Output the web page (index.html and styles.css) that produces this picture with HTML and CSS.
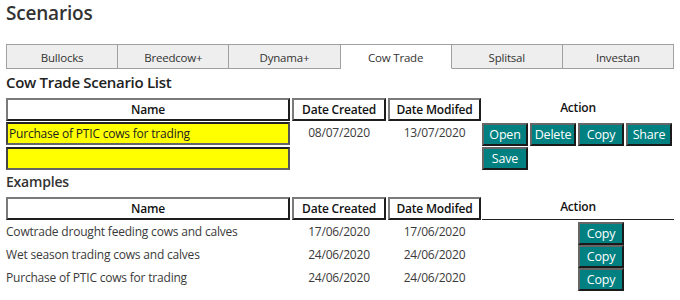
FILE: index.html
```html
<!DOCTYPE html>
<html lang="en">
<head>
  <meta charset="UTF-8" />
  <title>Scenarios</title>
  <link rel="stylesheet" href="styles.css">
</head>
<body>

  <h1 class="page-title">Scenarios</h1>

  <nav class="tabs" aria-label="Models">
    <a href="#" class="tab">Bullocks</a>
    <a href="#" class="tab">Breedcow+</a>
    <a href="#" class="tab">Dynama+</a>
    <a href="#" class="tab active">Cow Trade</a>
    <a href="#" class="tab">Splitsal</a>
    <a href="#" class="tab">Investan</a>
  </nav>

  <h2 class="section-title">Cow Trade Scenario List</h2>

  <div class="scenario-grid">
    <div class="th">Name</div>
    <div class="th">Date Created</div>
    <div class="th">Date Modifed</div>
    <div class="th-action">Action</div>

    <div class="name-cell">
      <input class="name-input" type="text" value="Purchase of PTIC cows for trading">
      <input class="name-input" type="text" value="">
    </div>
    <div class="date">08/07/2020</div>
    <div class="date">13/07/2020</div>
    <div class="actions">
      <button class="btn">Open</button>
      <button class="btn">Delete</button>
      <button class="btn">Copy</button>
      <button class="btn">Share</button>
      <button class="btn">Save</button>
    </div>
  </div>

  <h3 class="sub-title">Examples</h3>

  <div class="example-grid">
    <div class="th">Name</div>
    <div class="th">Date Created</div>
    <div class="th">Date Modifed</div>
    <div class="th-action underline">Action</div>

    <div class="name">Cowtrade drought feeding cows and calves</div>
    <div class="date">17/06/2020</div>
    <div class="date">17/06/2020</div>
    <div class="copy-cell"><button class="btn">Copy</button></div>

    <div class="name">Wet season trading cows and calves</div>
    <div class="date">24/06/2020</div>
    <div class="date">24/06/2020</div>
    <div class="copy-cell"><button class="btn">Copy</button></div>

    <div class="name">Purchase of PTIC cows for trading</div>
    <div class="date">24/06/2020</div>
    <div class="date">24/06/2020</div>
    <div class="copy-cell"><button class="btn">Copy</button></div>
  </div>

</body>
</html>
```

FILE: styles.css
```css
/* Reset */
* {
  box-sizing: border-box;
  margin: 0;
  padding: 0;
}
body {
  background-color: #fff;
  color: #333;
  font-family: "Open Sans", "Noto Sans", sans-serif;
  font-size: 12px;
  letter-spacing: -0.2px;
  padding: 0 6px;
}
a {
  color: inherit;
  text-decoration: none;
}

/* Headings */
.page-title {
  font-size: 19px;
  font-weight: 600;
  line-height: 26px;
  height: 44px;
  color: #333;
}
.section-title {
  font-size: 15px;
  font-weight: 600;
  letter-spacing: -0.3px;
  line-height: 22px;
  margin: 2px 0 5px;
  color: #222;
}
.sub-title {
  font-size: 14px;
  font-weight: 600;
  letter-spacing: -0.2px;
  line-height: 22px;
  margin: 1px 0 4px;
  color: #333;
}

/* Tabs */
.tabs {
  display: flex;
  height: 25px;
}
.tab {
  flex: 1;
  background-color: #eee;
  border: 1px solid #a0a0a0;
  border-left: none;
  text-align: center;
  font-size: 11.5px;
  line-height: 25px;
  color: #333;
}
.tab:first-child {
  border-left: 1px solid #a0a0a0;
}
.tab.active {
  background-color: #fff;
  border-bottom-color: transparent;
}

/* Tables */
.scenario-grid,
.example-grid {
  display: grid;
  grid-template-columns: 284px 94px 93px 1fr;
  column-gap: 2px;
}
.scenario-grid {
  grid-template-rows: 23px auto;
  row-gap: 1px;
}
.example-grid {
  grid-template-rows: 25px repeat(3, 23px);
}
.th {
  height: 23px;
  border: 2px solid;
  border-color: #7a7a7a #1e1e1e #1e1e1e #7a7a7a;
  font-weight: 600;
  color: #111;
  text-align: center;
  line-height: 19px;
}
.th-action {
  height: 23px;
  font-weight: 600;
  color: #111;
  text-align: center;
  line-height: 16px;
  padding-top: 2px;
  margin-left: -1px;
}
.th-action.underline {
  border-bottom: 1px solid #222;
}
.name-cell {
  display: flex;
  flex-direction: column;
  gap: 2px;
}
.name-input {
  height: 23px;
  width: 100%;
  background-color: #ff0;
  border: 2px solid;
  border-color: #222 #555 #666 #444;
  font-family: inherit;
  font-size: 12px;
  letter-spacing: -0.2px;
  color: #222;
  padding: 0 1px;
  outline: none;
}
.date {
  text-align: center;
  line-height: 21px;
  color: #3a3a3a;
}
.name {
  line-height: 21px;
  color: #3a3a3a;
}
.example-grid .name,
.example-grid .date {
  line-height: 20px;
}

/* Buttons */
.actions {
  display: flex;
  flex-wrap: wrap;
  gap: 1px 2px;
  padding-top: 1px;
  margin-left: -1px;
}
.copy-cell {
  padding-left: 95px;
}
.btn {
  background-color: #008080;
  color: #fff;
  height: 23px;
  width: 46px;
  padding: 0;
  border: 2px solid;
  border-color: #666 #1a1a1a #1a1a1a #666;
  font-family: inherit;
  font-size: 12.5px;
  letter-spacing: -0.2px;
  line-height: 17px;
  cursor: pointer;
}
```
